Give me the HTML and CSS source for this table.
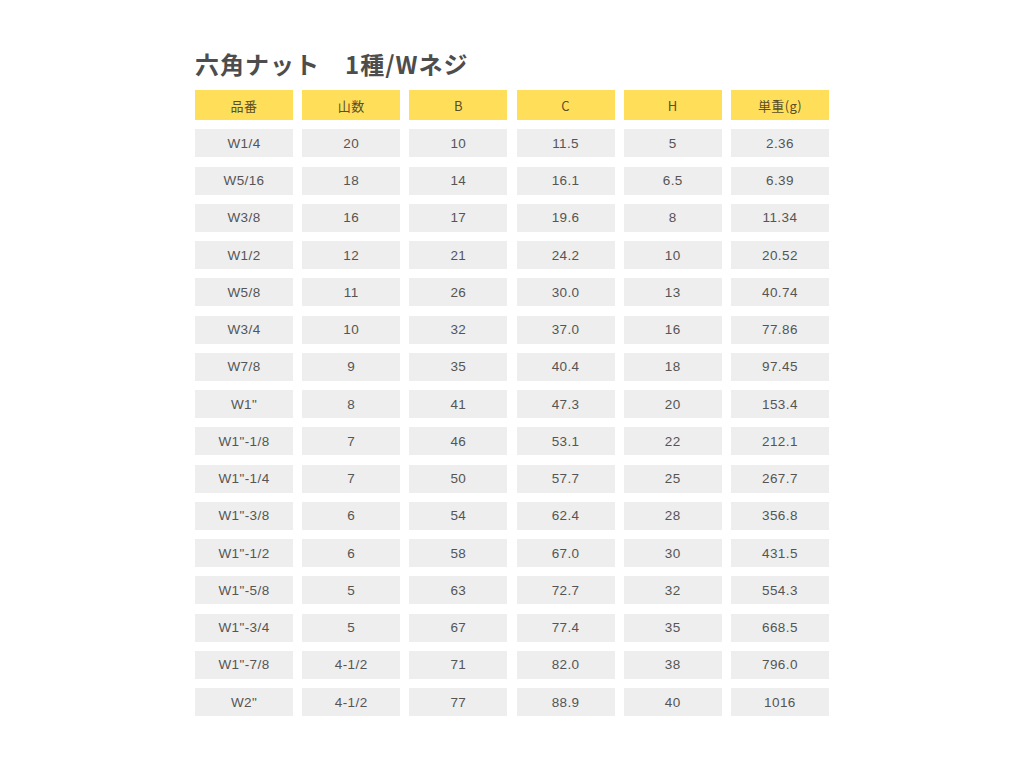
FILE: index.html
```html
<!DOCTYPE html>
<html lang="ja">
<head>
<meta charset="utf-8">
<title>六角ナット 1種/Wネジ</title>
<link rel="stylesheet" href="styles.css">
</head>
<body>
<main class="page">
  <h1 class="title">六角ナット　1種/Wネジ</h1>
  <div class="table" id="table">
    <div class="cell head">品番</div>
    <div class="cell head">山数</div>
    <div class="cell head">B</div>
    <div class="cell head">C</div>
    <div class="cell head">H</div>
    <div class="cell head">単重(g)</div>

    <div class="cell">W1/4</div><div class="cell">20</div><div class="cell">10</div><div class="cell">11.5</div><div class="cell">5</div><div class="cell">2.36</div>
    <div class="cell">W5/16</div><div class="cell">18</div><div class="cell">14</div><div class="cell">16.1</div><div class="cell">6.5</div><div class="cell">6.39</div>
    <div class="cell">W3/8</div><div class="cell">16</div><div class="cell">17</div><div class="cell">19.6</div><div class="cell">8</div><div class="cell">11.34</div>
    <div class="cell">W1/2</div><div class="cell">12</div><div class="cell">21</div><div class="cell">24.2</div><div class="cell">10</div><div class="cell">20.52</div>
    <div class="cell">W5/8</div><div class="cell">11</div><div class="cell">26</div><div class="cell">30.0</div><div class="cell">13</div><div class="cell">40.74</div>
    <div class="cell">W3/4</div><div class="cell">10</div><div class="cell">32</div><div class="cell">37.0</div><div class="cell">16</div><div class="cell">77.86</div>
    <div class="cell">W7/8</div><div class="cell">9</div><div class="cell">35</div><div class="cell">40.4</div><div class="cell">18</div><div class="cell">97.45</div>
    <div class="cell">W1"</div><div class="cell">8</div><div class="cell">41</div><div class="cell">47.3</div><div class="cell">20</div><div class="cell">153.4</div>
    <div class="cell">W1"-1/8</div><div class="cell">7</div><div class="cell">46</div><div class="cell">53.1</div><div class="cell">22</div><div class="cell">212.1</div>
    <div class="cell">W1"-1/4</div><div class="cell">7</div><div class="cell">50</div><div class="cell">57.7</div><div class="cell">25</div><div class="cell">267.7</div>
    <div class="cell">W1"-3/8</div><div class="cell">6</div><div class="cell">54</div><div class="cell">62.4</div><div class="cell">28</div><div class="cell">356.8</div>
    <div class="cell">W1"-1/2</div><div class="cell">6</div><div class="cell">58</div><div class="cell">67.0</div><div class="cell">30</div><div class="cell">431.5</div>
    <div class="cell">W1"-5/8</div><div class="cell">5</div><div class="cell">63</div><div class="cell">72.7</div><div class="cell">32</div><div class="cell">554.3</div>
    <div class="cell">W1"-3/4</div><div class="cell">5</div><div class="cell">67</div><div class="cell">77.4</div><div class="cell">35</div><div class="cell">668.5</div>
    <div class="cell">W1"-7/8</div><div class="cell">4-1/2</div><div class="cell">71</div><div class="cell">82.0</div><div class="cell">38</div><div class="cell">796.0</div>
    <div class="cell">W2"</div><div class="cell">4-1/2</div><div class="cell">77</div><div class="cell">88.9</div><div class="cell">40</div><div class="cell">1016</div>
  </div>
</main>
</body>
</html>
```

FILE: styles.css
```css
html, body {
  margin: 0;
  padding: 0;
  background: #ffffff;
}

body {
  font-family: "Liberation Sans", "Noto Sans CJK JP", sans-serif;
  color: #555555;
}

.page {
  width: 634px;
  margin: 0 auto;
  padding-top: 48px;
}

.title {
  margin: 0 0 11px 0;
  font-size: 24px;
  line-height: 31px;
  font-weight: bold;
  color: #4d4d4d;
  font-family: "Noto Sans CJK JP", "Liberation Sans", sans-serif;
  letter-spacing: 1px;
}

.table {
  display: grid;
  grid-template-columns: repeat(6, 98px);
  grid-template-rows: 30px repeat(16, 28px);
  column-gap: 9.2px;
  row-gap: 9.25px;
}

.cell {
  background: #eeeeee;
  display: flex;
  align-items: center;
  justify-content: center;
  font-size: 13.5px;
  color: #555555;
  letter-spacing: 0.4px;
}

.head {
  background: #ffdf5a;
  color: #5a4e2a;
  font-size: 13px;
  font-family: "Noto Sans CJK JP", "Liberation Sans", sans-serif;
}
```
